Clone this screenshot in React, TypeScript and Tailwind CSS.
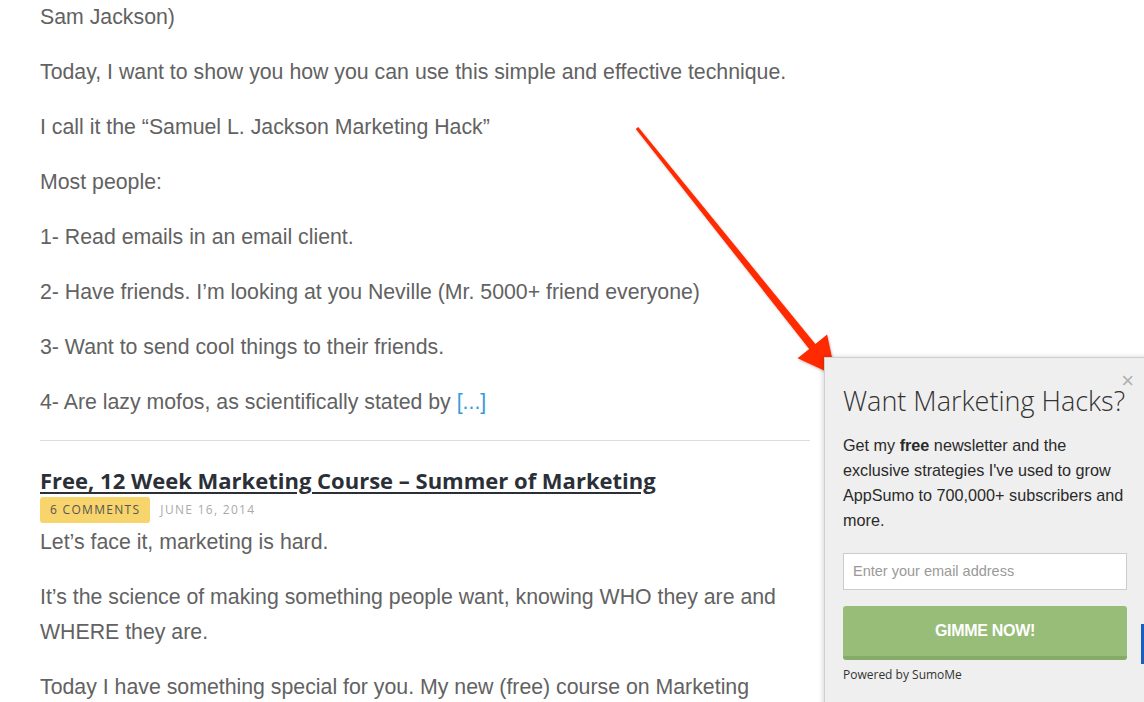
import React from "react";

const body = { fontFamily: '"Liberation Sans", Arial, sans-serif' };
const open = { fontFamily: '"Open Sans", "Liberation Sans", sans-serif' };

function P({ children }: { children: React.ReactNode }) {
  return <p className="mb-[20px] text-[21.3px] leading-[35px] text-[#626262]">{children}</p>;
}

export default function App() {
  return (
    <div className="relative h-[702px] w-[1144px] overflow-hidden bg-white" style={body}>
      <div className="ml-[40px] w-[770px]">
        <P>Sam Jackson)</P>
        <P>Today, I want to show you how you can use this simple and effective technique.</P>
        <P>I call it the “Samuel L. Jackson Marketing Hack”</P>
        <P>Most people:</P>
        <P>1- Read emails in an email client.</P>
        <P>2- Have friends. I’m looking at you Neville (Mr. 5000+ friend everyone)</P>
        <P>3- Want to send cool things to their friends.</P>
        <P>
          4- Are lazy mofos, as scientifically stated by <span className="text-[#3a9ad9]">[...]</span>
        </P>
        <div className="h-px w-full bg-[#dddddd]" />
        <h2
          className="mt-[24px] text-[22px] font-bold leading-[30px] text-[#2b3038] underline decoration-[2px] underline-offset-[3px]"
          style={open}
        >
          Free, 12 Week Marketing Course – Summer of Marketing
        </h2>
        <div className="mt-[2px] flex items-center gap-[10px]" style={open}>
          <span className="flex h-[26px] items-center rounded-[3px] bg-[#f8d46c] px-[10px] text-[12px] tracking-[1.3px] text-[#555]">
            6 COMMENTS
          </span>
          <span className="text-[12px] tracking-[1.3px] text-[#aaa]">JUNE 16, 2014</span>
        </div>
        <div className="mt-[2px]">
          <P>Let’s face it, marketing is hard.</P>
          <P>It’s the science of making something people want, knowing WHO they are and WHERE they are.</P>
          <P>Today I have something special for you. My new (free) course on Marketing</P>
        </div>
      </div>

      {/* arrow */}
      <svg className="pointer-events-none absolute left-0 top-0" width="1144" height="702">
        <defs>
          <filter id="sh" x="-20%" y="-20%" width="140%" height="140%">
            <feDropShadow dx="1" dy="1.5" stdDeviation="1" floodColor="#000" floodOpacity="0.25" />
          </filter>
        </defs>
        <polygon
          filter="url(#sh)"
          fill="#ff2a00"
          points="638.2,127.1 815.4,343.9 827.1,334.5 836,376 797.5,358.3 809.2,348.9 635.8,128.9"
        />
      </svg>

      {/* popup */}
      <div className="absolute left-[824px] top-[357px] h-[360px] w-[330px] border-l border-t border-[#cfcfcf] bg-[#efefef] pl-[18px] pr-[27px] shadow-[-2px_-1px_4px_rgba(0,0,0,0.12)]">
        <div className="absolute right-[20px] top-[12px] text-[22px] leading-[22px] text-[#b0b0b0]" style={body}>
          ×
        </div>
        <h3 className="mt-[23px] text-[27px] font-light leading-[40px] text-[#333]" style={open}>
          Want Marketing Hacks?
        </h3>
        <p className="mt-[12px] text-[16.2px] leading-[25px] text-[#2a2a2a]">
          Get my <b>free</b> newsletter and the exclusive strategies I've used to grow AppSumo to 700,000+ subscribers and
          more.
        </p>
        <div className="mt-[20px] flex h-[37px] items-center border border-[#cccccc] bg-white px-[9px] text-[14.5px] text-[#9a9a9a]">
          Enter your email address
        </div>
        <div className="mt-[16px] flex h-[54px] items-center justify-center rounded-[3px] border-b-[4px] border-[#86ab68] bg-[#97bd78] text-[16px] font-bold tracking-[-0.3px] text-white">
          GIMME NOW!
        </div>
        <div className="mt-[6px] text-[12px] text-[#333]" style={open}>
          Powered by SumoMe
        </div>
      </div>

      <div className="absolute left-[1141px] top-[624px] h-[40px] w-[3px] bg-[#1a5fbf]" />
    </div>
  );
}
